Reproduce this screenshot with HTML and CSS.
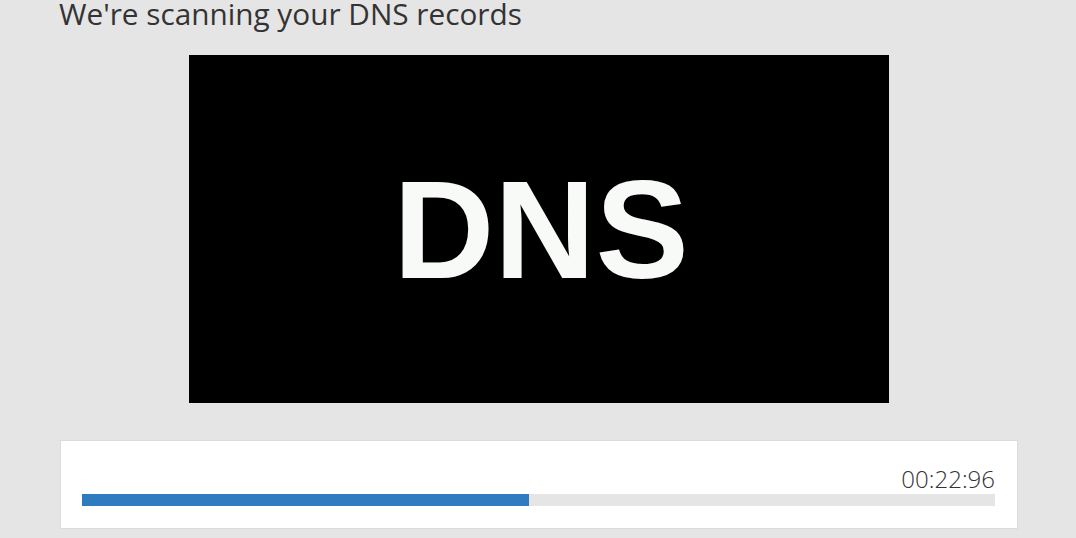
FILE: index.html
```html
<!DOCTYPE html>
<html>
<head>
<meta charset="utf-8">
<link rel="stylesheet" href="styles.css">
</head>
<body>
<main class="page">
  <h1 class="title">We're scanning your DNS records</h1>
  <div class="media">
    <div class="dns-image"><span class="dns-text">DNS</span></div>
  </div>
  <section class="card">
    <div class="timer">00:22:96</div>
    <div class="track"><div class="fill" style="width: 49%"></div></div>
  </section>
</main>
</body>
</html>
```
FILE: styles.css
```css
html, body {
  margin: 0;
  padding: 0;
  background: #e5e5e5;
}
body {
  font-family: "Open Sans", "Liberation Sans", sans-serif;
  color: #333;
}
.page {
  width: 958px;
  margin-left: 60px;
  display: flex;
  flex-direction: column;
}
.title {
  margin: 0 0 0 -1px;
  font-size: 29.75px;
  font-weight: 400;
  line-height: 28px;
  color: #333;
}
.media {
  display: flex;
  justify-content: center;
  margin-top: 27px;
}
.dns-image {
  width: 700px;
  height: 348px;
  background: #000;
  display: flex;
  align-items: center;
  justify-content: center;
}
.dns-text {
  font-family: "Liberation Sans", Arial, sans-serif;
  font-weight: 700;
  font-size: 140px;
  color: #f8faf7;
  line-height: 1;
  margin-left: 4px;
  margin-top: 2px;
}
.card {
  margin-top: 37px;
  background: #fff;
  border: 1px solid #dcdcdc;
  height: 89px;
  box-sizing: border-box;
  padding: 24px 22px 0 21px;
  display: flex;
  flex-direction: column;
}
.timer {
  text-align: right;
  font-size: 24px;
  font-weight: 300;
  line-height: 28px;
  color: #333;
}
.track {
  margin-top: 1px;
  height: 12px;
  background: #e5e5e5;
}
.fill {
  height: 100%;
  background: #2e7bbf;
}
```
